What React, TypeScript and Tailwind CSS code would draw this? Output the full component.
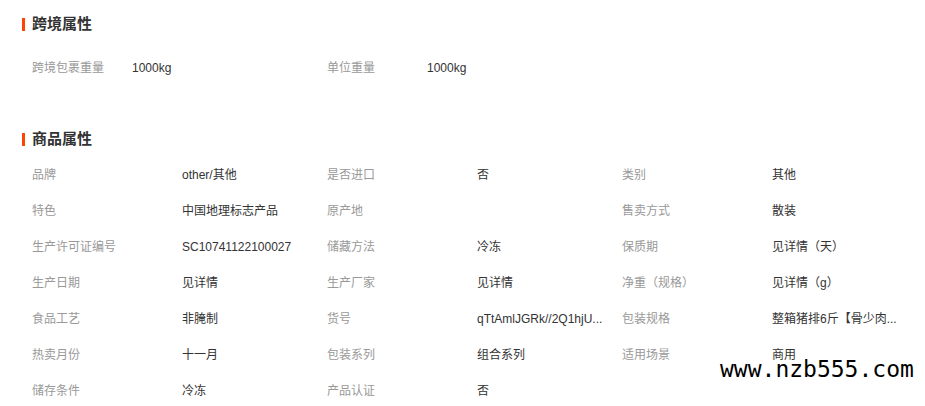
const font = "font-['Liberation_Sans','Noto_Sans_CJK_SC',sans-serif]";

const crossBorder = [
  { label: "跨境包裹重量", value: "1000kg" },
  { label: "单位重量", value: "1000kg" },
];

const attrs = [
  { label: "品牌", value: "other/其他" },
  { label: "是否进口", value: "否" },
  { label: "类别", value: "其他" },
  { label: "特色", value: "中国地理标志产品" },
  { label: "原产地", value: "" },
  { label: "售卖方式", value: "散装" },
  { label: "生产许可证编号", value: "SC10741122100027" },
  { label: "储藏方法", value: "冷冻" },
  { label: "保质期", value: "见详情（天）" },
  { label: "生产日期", value: "见详情" },
  { label: "生产厂家", value: "见详情" },
  { label: "净重（规格）", value: "见详情（g）" },
  { label: "食品工艺", value: "非腌制" },
  { label: "货号", value: "qTtAmlJGRk//2Q1hjU..." },
  { label: "包装规格", value: "整箱猪排6斤【骨少肉..." },
  { label: "热卖月份", value: "十一月" },
  { label: "包装系列", value: "组合系列" },
  { label: "适用场景", value: "商用" },
  { label: "储存条件", value: "冷冻" },
  { label: "产品认证", value: "否" },
];

function SectionTitle({ title }: { title: string }) {
  return (
    <div className="flex items-center h-6 pl-[22px]">
      <span className="w-[3px] h-[13px] bg-[#ff4400]" />
      <h2 className="ml-[7px] text-[15px] font-bold text-[#333]">{title}</h2>
    </div>
  );
}

export default function App() {
  return (
    <div className={`relative w-[925px] h-[406px] overflow-hidden bg-white ${font}`}>
      <div className="pt-3">
        <SectionTitle title="跨境属性" />
        <div className="grid grid-cols-[295px_295px] pl-8 mt-[14px]">
          {crossBorder.map((item) => (
            <div key={item.label} className="flex items-center h-9 text-xs">
              <span className="w-[100px] shrink-0 text-[#999]">{item.label}</span>
              <span className="text-[#333]">{item.value}</span>
            </div>
          ))}
        </div>
      </div>

      <div className="mt-[41px]">
        <SectionTitle title="商品属性" />
        <div className="grid grid-cols-[295px_295px_295px] pl-8 mt-[6px]">
          {attrs.map((item) => (
            <div key={item.label} className="flex items-center h-9 text-xs">
              <span className="w-[150px] shrink-0 text-[#999]">{item.label}</span>
              <span className="whitespace-nowrap text-[#333]">{item.value}</span>
            </div>
          ))}
        </div>
      </div>

      {/* watermark */}
      <div className="absolute left-[720px] top-[354px] font-['DejaVu_Sans_Mono',monospace] text-[23px] leading-[30px] text-black">
        www.nzb555.com
      </div>
    </div>
  );
}
